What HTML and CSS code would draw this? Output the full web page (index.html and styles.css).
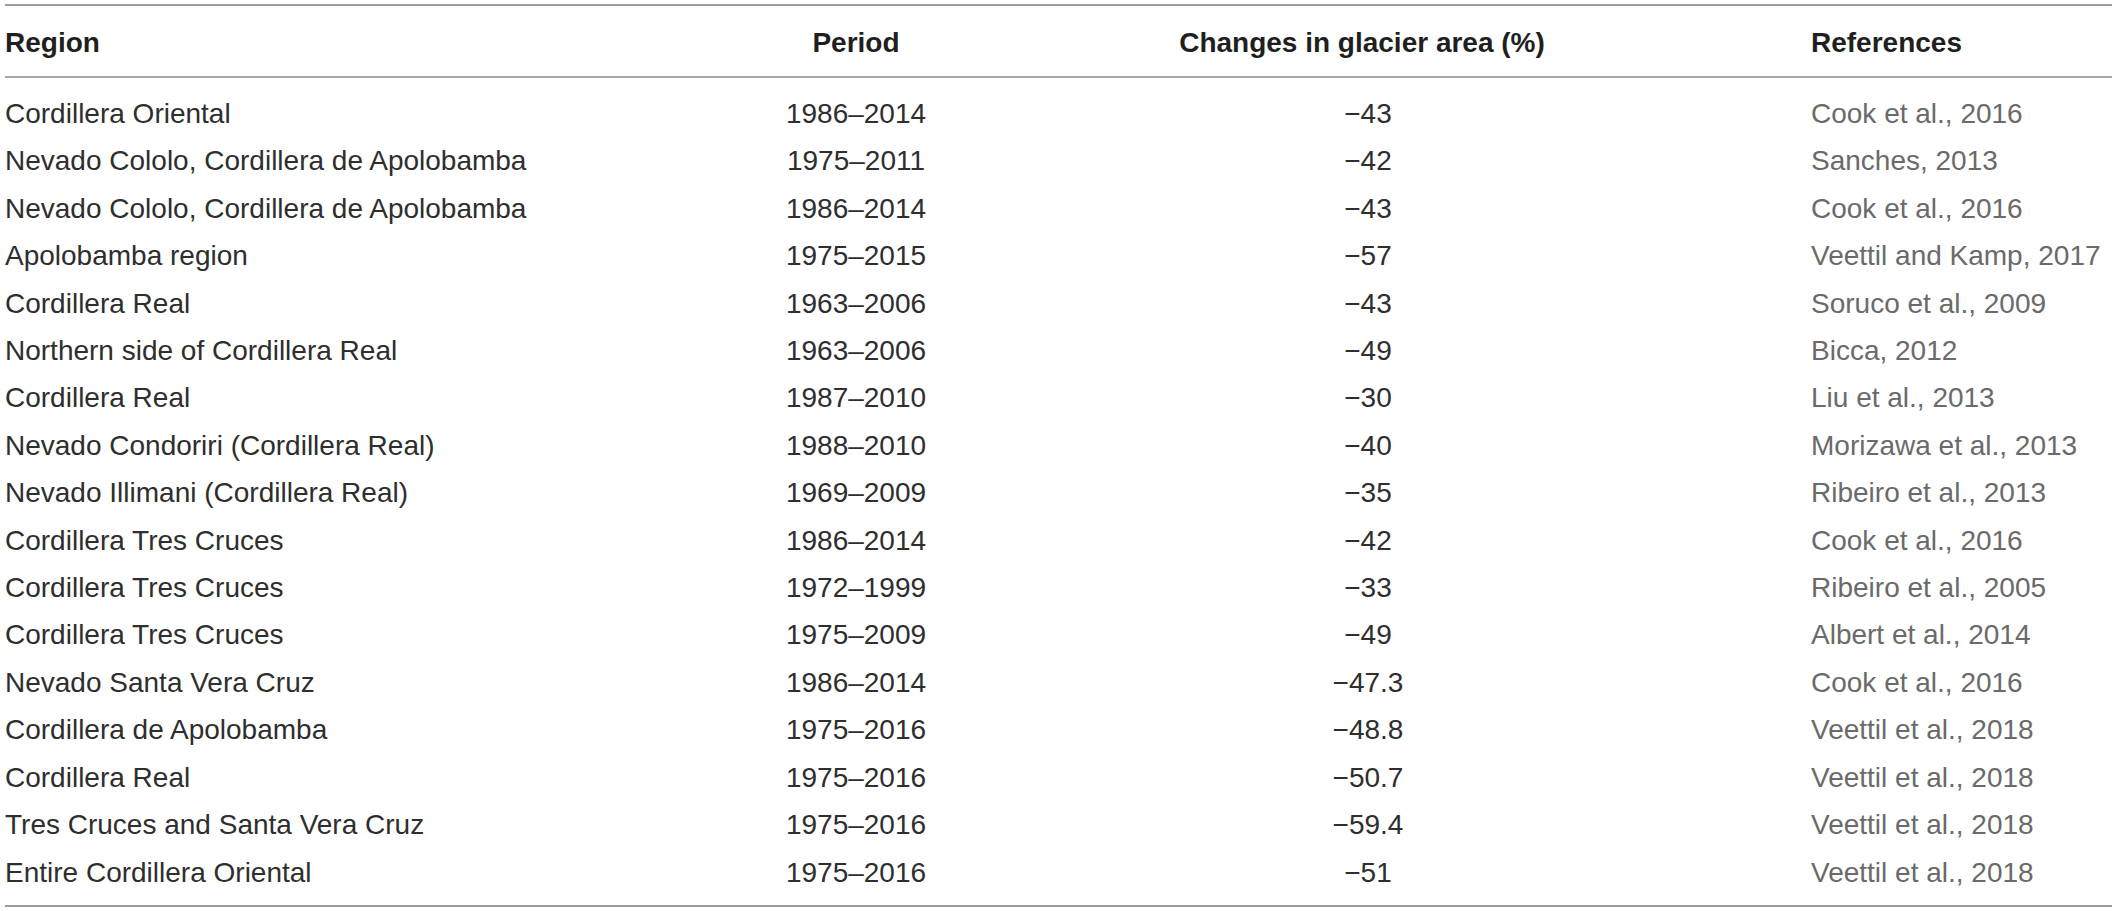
FILE: index.html
```html
<!DOCTYPE html>
<html lang="en">
<head>
  <meta charset="UTF-8">
  <title>Changes in glacier area</title>
  <link rel="stylesheet" href="styles.css">
</head>
<body>

  <div class="wrap">
    <table class="glaciers">
      <colgroup>
        <col class="col-region">
        <col class="col-period">
        <col class="col-change">
        <col class="col-ref">
      </colgroup>
      <thead>
        <tr>
          <th class="region">Region</th>
          <th class="period">Period</th>
          <th class="change">Changes in glacier area (%)</th>
          <th class="ref">References</th>
        </tr>
      </thead>
      <tbody>
        <tr><td class="region">Cordillera Oriental</td><td class="period">1986–2014</td><td class="change">−43</td><td class="ref">Cook et al., 2016</td></tr>
        <tr><td class="region">Nevado Cololo, Cordillera de Apolobamba</td><td class="period">1975–2011</td><td class="change">−42</td><td class="ref">Sanches, 2013</td></tr>
        <tr><td class="region">Nevado Cololo, Cordillera de Apolobamba</td><td class="period">1986–2014</td><td class="change">−43</td><td class="ref">Cook et al., 2016</td></tr>
        <tr><td class="region">Apolobamba region</td><td class="period">1975–2015</td><td class="change">−57</td><td class="ref">Veettil and Kamp, 2017</td></tr>
        <tr><td class="region">Cordillera Real</td><td class="period">1963–2006</td><td class="change">−43</td><td class="ref">Soruco et al., 2009</td></tr>
        <tr><td class="region">Northern side of Cordillera Real</td><td class="period">1963–2006</td><td class="change">−49</td><td class="ref">Bicca, 2012</td></tr>
        <tr><td class="region">Cordillera Real</td><td class="period">1987–2010</td><td class="change">−30</td><td class="ref">Liu et al., 2013</td></tr>
        <tr><td class="region">Nevado Condoriri (Cordillera Real)</td><td class="period">1988–2010</td><td class="change">−40</td><td class="ref">Morizawa et al., 2013</td></tr>
        <tr><td class="region">Nevado Illimani (Cordillera Real)</td><td class="period">1969–2009</td><td class="change">−35</td><td class="ref">Ribeiro et al., 2013</td></tr>
        <tr><td class="region">Cordillera Tres Cruces</td><td class="period">1986–2014</td><td class="change">−42</td><td class="ref">Cook et al., 2016</td></tr>
        <tr><td class="region">Cordillera Tres Cruces</td><td class="period">1972–1999</td><td class="change">−33</td><td class="ref">Ribeiro et al., 2005</td></tr>
        <tr><td class="region">Cordillera Tres Cruces</td><td class="period">1975–2009</td><td class="change">−49</td><td class="ref">Albert et al., 2014</td></tr>
        <tr><td class="region">Nevado Santa Vera Cruz</td><td class="period">1986–2014</td><td class="change">−47.3</td><td class="ref">Cook et al., 2016</td></tr>
        <tr><td class="region">Cordillera de Apolobamba</td><td class="period">1975–2016</td><td class="change">−48.8</td><td class="ref">Veettil et al., 2018</td></tr>
        <tr><td class="region">Cordillera Real</td><td class="period">1975–2016</td><td class="change">−50.7</td><td class="ref">Veettil et al., 2018</td></tr>
        <tr><td class="region">Tres Cruces and Santa Vera Cruz</td><td class="period">1975–2016</td><td class="change">−59.4</td><td class="ref">Veettil et al., 2018</td></tr>
        <tr><td class="region">Entire Cordillera Oriental</td><td class="period">1975–2016</td><td class="change">−51</td><td class="ref">Veettil et al., 2018</td></tr>
      </tbody>
    </table>
  </div>

</body>
</html>
```

FILE: styles.css
```css
* {
  margin: 0;
  padding: 0;
  box-sizing: border-box;
}

body {
  font-family: 'Liberation Sans', Arial, sans-serif;
  background: #fff;
  color: #2e2e2e;
}

.wrap {
  padding: 4px 6px 0 5px;
}

.glaciers {
  width: 2107px;
  border-collapse: collapse;
  table-layout: fixed;
  font-size: 28px;
  border-top: 2px solid #9c9c9c;
  border-bottom: 2px solid #9c9c9c;
}

.col-region { width: 651px; }
.col-period { width: 400px; }
.col-change { width: 612px; }
.col-ref { width: 444px; }

.glaciers th {
  font-weight: 700;
  color: #1f1f1f;
  line-height: 32px;
  padding: 21px 0 17px;
  border-bottom: 2px solid #a8a8a8;
}

.glaciers td {
  font-weight: 400;
  line-height: 47.4px;
  height: 47.4px;
  white-space: nowrap;
}

.glaciers tbody tr:first-child td {
  padding-top: 12px;
}

.glaciers tbody tr:last-child td {
  padding-bottom: 9px;
}

.region {
  text-align: left;
}

.period,
.change {
  text-align: center;
}

.glaciers td.change {
  padding-left: 12px;
}

.glaciers th.ref,
.glaciers td.ref {
  text-align: left;
  padding-left: 143px;
}

.glaciers td.ref {
  color: #6a6a6a;
}
```
